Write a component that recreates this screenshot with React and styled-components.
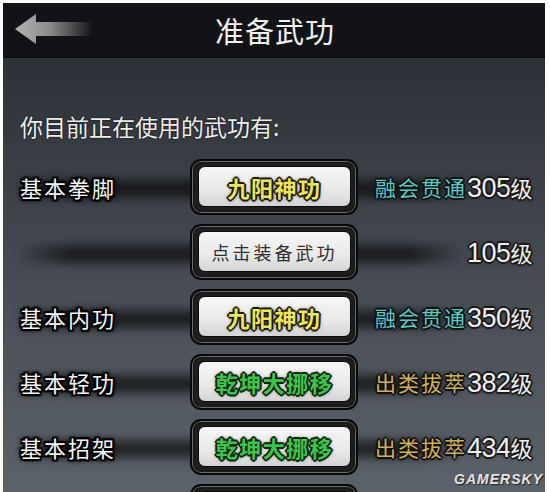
import React from 'react';
import styled, { createGlobalStyle } from 'styled-components';

const Global = createGlobalStyle`
  body {
    margin: 0;
    background: #fff;
    font-family: "Noto Sans CJK SC", "Noto Sans", sans-serif;
  }
`;

const Frame = styled.div`
  width: 550px;
  height: 492px;
  overflow: hidden;
  box-sizing: border-box;
  padding: 3px 5px 0 3px;
  background: #fff;
  position: relative;
`;

const Screen = styled.div`
  height: 100%;
  display: flex;
  flex-direction: column;
  background: linear-gradient(180deg, #272a30 0px, #383c43 150px, #4a4f57 300px, #5c626a 489px);
`;

const Header = styled.div`
  height: 54px;
  flex: none;
  background: #121316;
  border-bottom: 1px solid #0a0a0b;
  display: flex;
  align-items: center;
  padding: 0 10px;
  position: relative;
`;

const Back = styled.svg`
  width: 82px;
  height: 34px;
  flex: none;
`;

const Title = styled.h1`
  flex: 1;
  margin: 0 80px 0 0;
  text-align: center;
  font-size: 29px;
  font-weight: 400;
  letter-spacing: 1px;
  color: #f2f2f2;
  line-height: 1;
`;

const Body = styled.div`
  flex: 1;
  padding: 0 0 0 17px;
`;

const Intro = styled.p`
  margin: 52px 0 17px 0;
  font-size: 23px;
  line-height: 32px;
  color: #eeeeee;
  font-weight: 400;
  text-shadow: 0 0 2px #000;
`;

const Row = styled.div`
  height: 56px;
  margin-bottom: 9px;
  display: flex;
  align-items: center;
  position: relative;
  &::before {
    content: '';
    position: absolute;
    left: -4px;
    right: 80px;
    top: 50%;
    height: 18px;
    margin-top: -7px;
    background: linear-gradient(90deg, rgba(0,0,0,0) 0%, rgba(0,0,0,0.6) 12%, rgba(0,0,0,0.6) 88%, rgba(0,0,0,0) 100%);
    filter: blur(5px);
  }
`;

const outline = (c) => `
  -1px -1px 0 ${c}, 1px -1px 0 ${c}, -1px 1px 0 ${c}, 1px 1px 0 ${c},
  0 -2px 0 ${c}, 0 2px 0 ${c}, -2px 0 0 ${c}, 2px 0 0 ${c}, 0 0 4px ${c}
`;

const heavy = (c) => `
  ${outline(c)}, -2px -2px 1px ${c}, 2px -2px 1px ${c}, -2px 2px 1px ${c}, 2px 2px 1px ${c}, 0 0 6px ${c}
`;

const Label = styled.div`
  width: 170px;
  flex: none;
  position: relative;
  font-size: 22px;
  letter-spacing: 2px;
  color: #f6f6f6;
  text-shadow: ${heavy('#000')};
  white-space: nowrap;
`;

const ButtonFrame = styled.div`
  width: 168px;
  height: 56px;
  flex: none;
  box-sizing: border-box;
  position: relative;
  border-radius: 11px;
  background: #1d1e20;
  border: 2px solid #080808;
  box-shadow: inset 0 0 0 1px #6a6c70, inset 0 0 0 3px #18191b;
  padding: 5px 5px 6px 6px;
`;

const ButtonFace = styled.div`
  height: 100%;
  box-sizing: border-box;
  border-radius: 7px;
  border: 1px solid #0b0b0b;
  background: linear-gradient(180deg, #f6f6f6 0%, #e9e9e9 60%, #d4d4d4 100%);
  display: flex;
  align-items: center;
  justify-content: center;
  white-space: nowrap;
`;

const SkillName = styled.span`
  font-size: 22px;
  font-weight: 700;
  letter-spacing: 1.5px;
  color: ${(p) => p.$color};
  text-shadow: ${(p) => outline(p.$edge)};
`;

const Placeholder = styled.span`
  font-size: 18px;
  letter-spacing: 3px;
  color: #2e2e2e;
`;

const Status = styled.div`
  width: 174px;
  flex: none;
  position: relative;
  display: flex;
  align-items: center;
  justify-content: flex-end;
  white-space: nowrap;
`;

const Rank = styled.span`
  font-size: 21px;
  letter-spacing: 2px;
  color: ${(p) => p.$color};
  text-shadow: ${outline('#111')};
`;

const Level = styled.span`
  font-family: "Liberation Sans", "Noto Sans CJK SC", sans-serif;
  font-size: 27px;
  color: #f0f0f0;
  text-shadow: ${outline('#1a1a1a')};
  letter-spacing: -0.5px;
  small {
    font-family: "Noto Sans CJK SC", sans-serif;
    font-size: 22px;
  }
`;

const Watermark = styled.div`
  position: absolute;
  right: 7px;
  bottom: 5px;
  font-family: "Liberation Sans", Arial, sans-serif;
  font-size: 14px;
  font-weight: 700;
  font-style: italic;
  letter-spacing: 1px;
  color: #e4e4e4;
  text-shadow: 1px 1px 1px #222;
`;

const rows = [
  { label: '基本拳脚', skill: '九阳神功', tone: 'yellow', rank: '融会贯通', rankColor: '#5ec8c2', level: '305' },
  { label: '', skill: null, level: '105' },
  { label: '基本内功', skill: '九阳神功', tone: 'yellow', rank: '融会贯通', rankColor: '#5ec8c2', level: '350' },
  { label: '基本轻功', skill: '乾坤大挪移', tone: 'green', rank: '出类拔萃', rankColor: '#cdb05c', level: '382' },
  { label: '基本招架', skill: '乾坤大挪移', tone: 'green', rank: '出类拔萃', rankColor: '#cdb05c', level: '434' },
  { label: '', skill: '', level: '' },
];

const tones = {
  yellow: { color: '#ebe65e', edge: '#1c1c10' },
  green: { color: '#3fc24c', edge: '#0a240c' },
};

const App = () => {
  return (
    <Frame>
      <Global />
      <Screen>
        <Header>
          <Back viewBox="0 0 82 34">
            <defs>
              <linearGradient id="arrowFade" x1="0" y1="0" x2="1" y2="0">
                <stop offset="0" stopColor="#b4b4b4" />
                <stop offset="0.45" stopColor="#8a8a8a" />
                <stop offset="1" stopColor="#8a8a8a" stopOpacity="0" />
              </linearGradient>
            </defs>
            <path d="M2 16 L23 1 L23 9 L80 9 L80 23 L23 23 L23 31 Z" fill="url(#arrowFade)" />
          </Back>
          <Title>准备武功</Title>
        </Header>
        <Body>
          <Intro>你目前正在使用的武功有:</Intro>
          {rows.map((r, i) => (
            <Row key={i}>
              <Label>{r.label}</Label>
              <ButtonFrame>
                <ButtonFace>
                  {r.skill === null ? (
                    <Placeholder>点击装备武功</Placeholder>
                  ) : r.skill ? (
                    <SkillName $color={tones[r.tone].color} $edge={tones[r.tone].edge}>{r.skill}</SkillName>
                  ) : null}
                </ButtonFace>
              </ButtonFrame>
              <Status>
                {r.rank && <Rank $color={r.rankColor}>{r.rank}</Rank>}
                {r.level && (
                  <Level>
                    {r.level}
                    <small>级</small>
                  </Level>
                )}
              </Status>
            </Row>
          ))}
        </Body>
      </Screen>
      <Watermark>GAMERSKY</Watermark>
    </Frame>
  );
};

export default App;
